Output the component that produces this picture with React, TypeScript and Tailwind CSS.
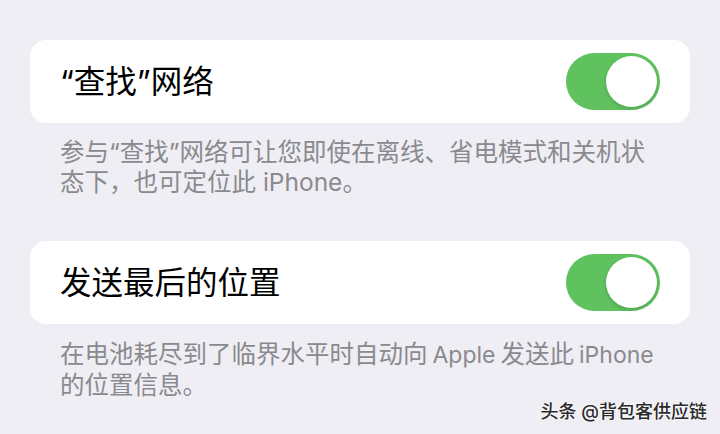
import React from "react";

const font = { fontFamily: '"Inter", "Noto Sans CJK SC", sans-serif' };

function Toggle() {
  return (
    <div className="relative w-[94px] h-[57px] rounded-full bg-[#5fc25f] shrink-0">
      <div className="absolute right-[3px] top-[3px] w-[51px] h-[51px] rounded-full bg-white shadow-[0_2px_4px_rgba(0,0,0,0.15)]" />
    </div>
  );
}

function Row({ title }: { title: string }) {
  return (
    <div className="h-[83px] rounded-[16px] bg-white flex items-center justify-between pl-[30px] pr-[30px]">
      <span className="text-[31.5px] leading-none text-black">{title}</span>
      <Toggle />
    </div>
  );
}

function Latin({ children, r = true }: { children: string; r?: boolean }) {
  return (
    <span className={`pl-[5px] text-[23px] ${r ? "pr-[5px]" : ""}`}>{children}</span>
  );
}

export default function App() {
  return (
    <div
      className="relative w-[720px] h-[434px] overflow-hidden bg-[#efeef4] pt-[40px] px-[30px]"
      style={font}
    >
      <Row title="“查找”网络" />
      <p className="mt-[14px] pl-[30px] pr-[25px] text-[24.5px] leading-[30px] text-[#8a8a8e]">
        参与“查找”网络可让您即使在离线、省电模式和关机状态下，也可定位此 iPhone。
      </p>
      <div className="mt-[44px]">
        <Row title="发送最后的位置" />
      </div>
      <p className="mt-[15px] pl-[30px] pr-[25px] text-[24.5px] leading-[30px] text-[#8a8a8e]">
        在电池耗尽到了临界水平时自动向<Latin>Apple</Latin>发送此<Latin r={false}>iPhone</Latin> 的位置信息。
      </p>
      <div
        className="absolute right-[13px] top-[400px] text-[18px] leading-[24px] font-medium text-[#2a2a2a]"
        style={{ textShadow: "0 0 2px #fff, 0 0 2px #fff" }}
      >
        头条 @背包客供应链
      </div>
    </div>
  );
}
